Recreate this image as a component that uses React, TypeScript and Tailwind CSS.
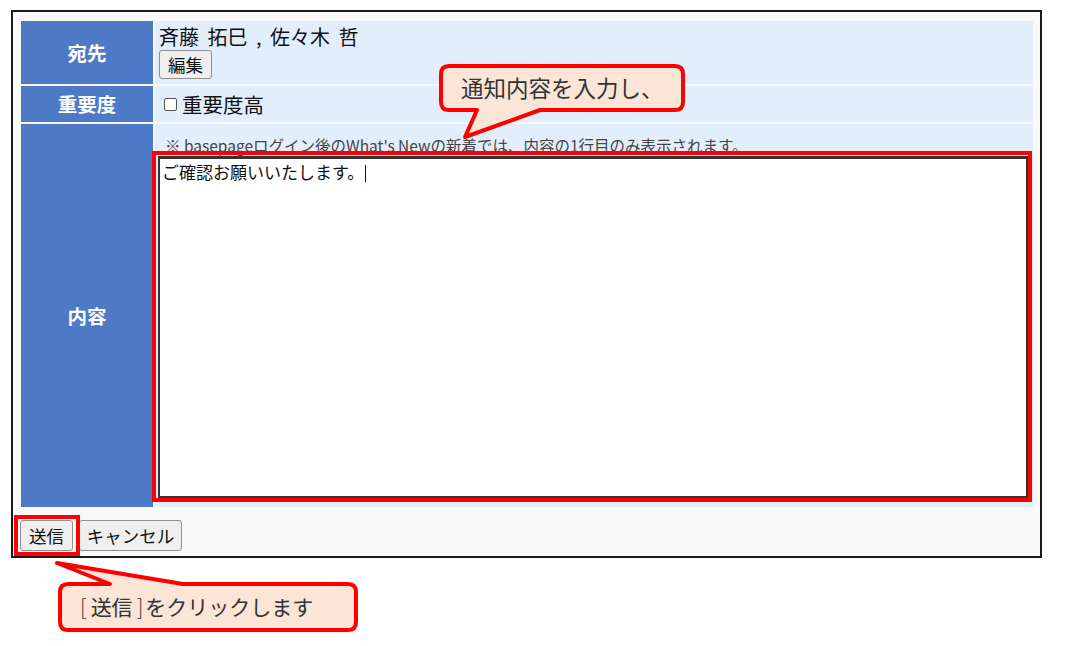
import React from "react";

const jp = { fontFamily: '"Noto Sans CJK JP", "Noto Sans", sans-serif' };

function Btn({ children, className = "" }: { children: React.ReactNode; className?: string }) {
  return (
    <button
      className={
        "border border-[#8f8f8f] rounded-[3px] bg-[#efefef] text-[#111] text-[17.5px] leading-none whitespace-nowrap flex items-center justify-center " +
        className
      }
      style={jp}
    >
      {children}
    </button>
  );
}

export default function App() {
  return (
    <div className="relative w-[1065px] h-[646px] bg-white overflow-hidden" style={jp}>
      {/* frame */}
      <div className="ml-[11px] mt-[10px] w-[1031px] h-[548px] border-2 border-[#1a1a1a] bg-[#f9f9f9] pl-[8px] pr-[7px] pt-[9px] flex flex-col">
        <div className="flex flex-col gap-[2px]">
          {/* row 1 */}
          <div className="flex gap-[2px] h-[63px]">
            <div className="w-[132px] bg-[#4e79c7] flex items-center justify-center text-white font-bold text-[19.5px]">
              宛先
            </div>
            <div className="flex-1 bg-[#e2eefc] pl-[4px] pt-[4px] flex flex-col items-start">
              <div className="text-[20px] leading-[24px] text-[#111] whitespace-pre [word-spacing:4px]">斉藤 拓巳 , 佐々木 哲</div>
              <Btn className="h-[29px] w-[53px] mt-[1px]">編集</Btn>
            </div>
          </div>
          {/* row 2 */}
          <div className="flex gap-[2px] h-[36px]">
            <div className="w-[132px] bg-[#4e79c7] flex items-center justify-center text-white font-bold text-[19.5px]">
              重要度
            </div>
            <div className="flex-1 bg-[#e2eefc] pl-[9px] flex items-center">
              <span className="w-[13px] h-[13px] border border-[#555] rounded-[2px] bg-white mr-[5px]" />
              <span className="text-[20.5px] text-[#111]">重要度高</span>
            </div>
          </div>
          {/* row 3 */}
          <div className="flex gap-[2px] h-[383px]">
            <div className="w-[132px] bg-[#4e79c7] flex items-center justify-center text-white font-bold text-[19.5px]">
              内容
            </div>
            <div className="flex-1 bg-[#e2eefc] pl-[3px] pr-[5px] pt-[11px] flex flex-col">
              <div className="text-[15.5px] leading-[20px] text-[#444] pl-[7px] whitespace-nowrap h-[21px] overflow-hidden">
                ※ basepageログイン後のWhat's Newの新着では、内容の1行目のみ表示されます。
              </div>
              <div className="relative h-[342px]">
                <div className="h-full border-2 border-t-[3px] border-[#333] bg-white px-[2px] pt-[2px] text-[17px] leading-[22px] text-[#111]">
                  ご確認お願いいたします。
                  <span className="inline-block w-[1px] h-[17px] bg-[#111] align-[-3px] ml-[1px]" />
                </div>
                <div className="absolute -left-[6px] -top-[5px] -right-[4px] -bottom-[4px] border-[4px] border-[#ff0000]" />
              </div>
            </div>
          </div>
        </div>
        {/* buttons */}
        <div className="flex gap-[6px] mt-[13px] ml-[-1px]">
          <div className="relative">
            <Btn className="h-[31px] w-[53px]">送信</Btn>
            <div className="absolute -left-[6px] -top-[5px] -right-[7px] -bottom-[5px] border-[4px] border-[#ff0000]" />
          </div>
          <Btn className="h-[31px] w-[103px]">キャンセル</Btn>
        </div>
      </div>

      {/* callout 1 */}
      <svg className="absolute left-[430px] top-[60px]" width="265" height="85">
        <path
          d="M 19 6 H 245 Q 253 6 253 14 V 42 Q 253 50 245 50 H 110 L 35 77 L 47 50 H 19 Q 11 50 11 42 V 14 Q 11 6 19 6 Z"
          fill="#fbe5d6"
          stroke="#ff0000"
          strokeWidth="4"
          strokeLinejoin="round"
        />
      </svg>
      <div className="absolute left-[461px] top-[73px] text-[22.5px] leading-[28px] text-[#333] whitespace-nowrap">
        通知内容を入力し、
      </div>

      {/* callout 2 */}
      <svg className="absolute left-[50px] top-[555px]" width="315" height="85">
        <path
          d="M 18 29 H 60 L 7 8 L 133 29 H 298 Q 306 29 306 37 V 67 Q 306 75 298 75 H 18 Q 10 75 10 67 V 37 Q 10 29 18 29 Z"
          fill="#fbe5d6"
          stroke="#ff0000"
          strokeWidth="4"
          strokeLinejoin="round"
        />
      </svg>
      <div className="absolute left-[80px] top-[592px] text-[21px] leading-[28px] text-[#333] whitespace-nowrap">
        <span className="font-light mr-[4px]">[</span>送信<span className="font-light ml-[4px] mr-[2px]">]</span>をクリックします
      </div>
    </div>
  );
}
